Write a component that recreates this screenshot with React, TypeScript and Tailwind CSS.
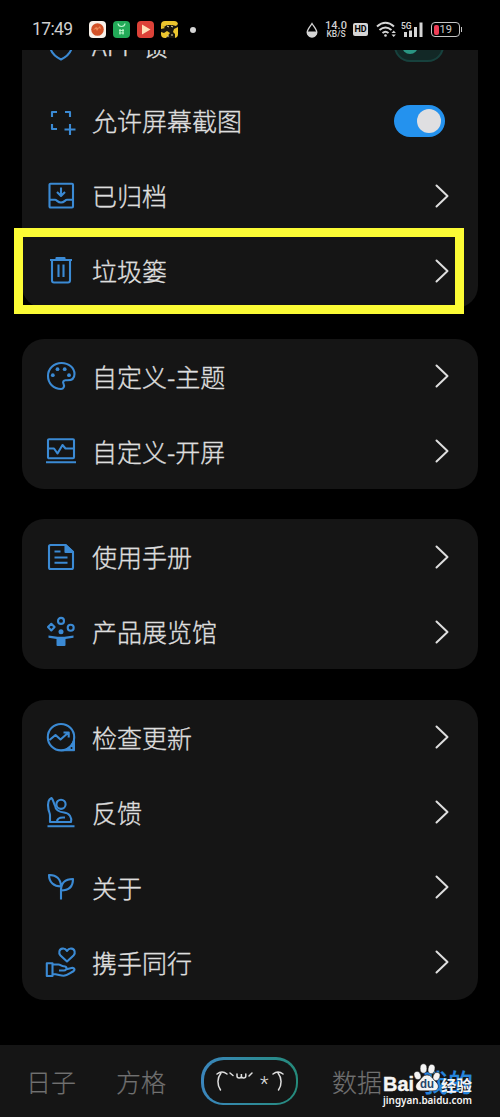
import type { ReactNode } from 'react';

const icons: Record<string, ReactNode> = {
  lock: <path d="M15 1l11 4v9c0 7-4 11-11 14.500C8 25 4 21 4 14V5z" />,
  screenshot: (
    <path d="M6 11V6h5M19 6h5v5M6 18v5h5M24 18v11M18.500 23.500h11" />
  ),
  archive: (
    <>
      <rect x="3.500" y="2.800" width="23.500" height="23.700" rx="1" />
      <path d="M15 6.500v8M11 11l4 4 4-4M3.500 18.800H9c2 0 2.500 2.700 6 2.700s4-2.700 6-2.700h6" />
    </>
  ),
  trash: (
    <>
      <path d="M4 4h22M10.500 3V2h8v1M6 4.500v20c0 1.500.5 2 2 2h14c1.500 0 2-.5 2-2v-20" />
      <path d="M12.500 8.500v12.500M17.500 8.500v12.500" />
    </>
  ),
  theme: (
    <>
      <path d="M15 28C7.500 28 2 22.200 2 15S7.800 2 15.500 2C23 2 28.500 7 28.500 13c0 4.500-3 6.300-7 6.300h-2c-2 0-3 1.700-2 3.500 1.300 2.500 0 5.200-2.500 5.200z" />
      <g fill="currentColor" strokeWidth="0">
        <circle cx="6.800" cy="14.200" r="1.900" />
        <circle cx="11.500" cy="8.200" r="1.900" />
        <circle cx="18.700" cy="8.200" r="1.900" />
        <circle cx="23" cy="14.200" r="1.900" />
      </g>
    </>
  ),
  splash: (
    <>
      <rect x="2" y="3.300" width="26" height="19" rx="1" />
      <path d="M2 12.500h6l3.500 5 5-8.500 3 3.500H28M0 26.300h30" />
    </>
  ),
  manual: (
    <>
      <path d="M19.500 3H4.500Q3 3 3 4.500v21Q3 27 4.500 27h21q1.500 0 1.500-1.500V10z" />
      <path d="M19.500 3v7H27z" fill="currentColor" />
      <path d="M8.500 9.500h6M8.500 15.500h13M8.500 20.800h13" />
    </>
  ),
  gallery: (
    <>
      <circle cx="15" cy="3.900" r="3" />
      <path d="M5.300 6.800l3.300 3.300-3.300 3.300L2 10.100z" />
      <circle cx="24.700" cy="10.800" r="3" />
      <g fill="currentColor" strokeWidth="0">
        <circle cx="15" cy="14.700" r="2.500" />
        <path d="M2.500 18.500l9 1.200h7l9-1.200v2.300l-8 1.200V28q0 1-1 1h-7q-1 0-1-1v-6l-8-1.200z" />
      </g>
    </>
  ),
  update: (
    <>
      <circle cx="15" cy="15.200" r="13.200" />
      <path d="M3.500 18l6-5 5 4.500 8-7M17.500 10.500h5.200v5" />
      <path d="M28.500 15.500V28.700H15.500C21 27.500 27 23 28.500 15.500z" fill="currentColor" strokeWidth="1" />
      <circle cx="25.500" cy="26" r="1" fill="#151515" strokeWidth="0" />
    </>
  ),
  feedback: (
    <>
      <circle cx="15" cy="7.300" r="4.600" />
      <path d="M5.500 1C2 2.500 1.500 7.500 2.500 12.500c.5 2.500 1.500 3.500 1.500 6V25h21c1-4.500-1.500-9-7-9.500-5-.5-8.500-2.500-9-7C7.500 6 7.500 3 5.500 1zM11 25c0-3 2-4.500 6-4.500h2M1.500 29.300h27" />
    </>
  ),
  about: (
    <path d="M15 27.500V16.500M15 14.500C8 14.500 3 10.500 3 3c7-.5 12 4 12 11.500zM15 18.500c0-7 4-11.500 12-11.500 0 7-4 11.500-12 11.500z" />
  ),
  support: (
    <>
      <path d="M21 14.500l-6.500-6c-2.300-2.500-1.300-6.500 2-6.900 2.200-.3 3.600.9 4.500 2.200.9-1.300 2.300-2.500 4.500-2.200 3.300.4 4.300 4.400 2 6.900z" />
      <path d="M.8 16.300h5.700V29H.8zM6.500 17.500h6c2 0 3 1.700 5 1.700 4 0 4 4.300.5 4.300h-5M19.500 22.500l6-1.500c3-.5 4 2 1.500 3.500-3.500 2-6 4.300-9.500 4.300-3.500 0-6-1.800-11-1.800" />
    </>
  ),
};

const groups = [
  [
    { icon: 'lock', label: 'APP 锁', toggle: 'off' },
    { icon: 'screenshot', label: '允许屏幕截图', toggle: 'on' },
    { icon: 'archive', label: '已归档' },
    { icon: 'trash', label: '垃圾篓', highlighted: true },
  ],
  [
    { icon: 'theme', label: '自定义-主题' },
    { icon: 'splash', label: '自定义-开屏' },
  ],
  [
    { icon: 'manual', label: '使用手册' },
    { icon: 'gallery', label: '产品展览馆' },
  ],
  [
    { icon: 'update', label: '检查更新' },
    { icon: 'feedback', label: '反馈' },
    { icon: 'about', label: '关于' },
    { icon: 'support', label: '携手同行' },
  ],
];

type Item = { icon: string; label: string; toggle?: string; highlighted?: boolean };

function Toggle({ on }: { on: boolean }) {
  if (!on) {
    return (
      <div className="mr-[10px] flex h-8 w-[50px] items-center rounded-full border-2 border-[#17413d] bg-[#122826] px-1.5">
        <div className="h-4 w-4 rounded-full bg-[#2a9582]" />
      </div>
    );
  }
  return (
    <div className="mr-[9px] flex h-8 w-[51px] items-center justify-end rounded-full bg-[#2492ee] px-1">
      <div className="h-6 w-6 rounded-full bg-[#dfdfe1]" />
    </div>
  );
}

function Row({ item }: { item: Item }) {
  return (
    <div className="relative flex h-[75px] items-center pr-6 pl-6">
      <svg
        className="h-[30px] w-[30px] shrink-0 text-[#3b8ad4]"
        viewBox="0 0 30 30"
        fill="none"
        stroke="currentColor"
        strokeWidth="2.100"
        strokeLinejoin="round"
        overflow="visible"
      >
        {icons[item.icon]}
      </svg>
      <span className="ml-4 flex-1 text-[25px] leading-none font-light whitespace-nowrap text-[#dedede] [-webkit-text-stroke:0.35px]">
        {item.label}
      </span>
      {item.toggle ? (
        <Toggle on={item.toggle === 'on'} />
      ) : (
        <svg className="mr-[5px] h-6 w-[14px]" viewBox="0 0 14 24" fill="none" stroke="#dedede" strokeWidth="2" strokeLinecap="round" strokeLinejoin="round">
          <path d="M1.500 1.500L12.500 12l-11 10.500" />
        </svg>
      )}
      {item.highlighted && (
        <div className="absolute -top-[5px] -left-2 h-[86px] w-[450px] border-[9px] border-[#fbfb35]" />
      )}
    </div>
  );
}

function StatusBar() {
  return (
    <header className="flex h-[50px] shrink-0 items-center pt-[9px] pr-[38px] pl-8 text-[#cfcfcf]">
      <span className="w-[57px] font-['Roboto'] text-[17.500px] leading-none tracking-[-0.600px] whitespace-nowrap">17:49</span>
      <div className="flex items-center gap-[7px]">
        <svg className="h-[17px] w-[17px]" viewBox="0 0 17 17">
          <rect width="17" height="17" rx="4" fill="#f8f1e9" />
          <circle cx="8.500" cy="8.500" r="6.300" fill="#d35227" />
          <path d="M4 9l3-3 2 1 2-2 1 3-2-1-2 3-1-2z" fill="#f08a58" />
        </svg>
        <svg className="h-[17px] w-[17px]" viewBox="0 0 17 17" fill="none" stroke="#b7f5c9" strokeWidth="1.200">
          <rect width="17" height="17" rx="4" fill="#22aa58" stroke="none" />
          <path d="M5 2.500c.5 4 6.500 4 7 0M6 9.500h5M6 12h5M7 8v5.500M10 8v5.500" />
        </svg>
        <svg className="h-[17px] w-[17px]" viewBox="0 0 17 17">
          <rect width="17" height="17" rx="4" fill="#dc4238" />
          <path d="M5 3.500l8.500 5-8.500 5z" fill="#ffe0b8" />
        </svg>
        <svg className="h-[17px] w-[17px]" viewBox="0 0 17 17">
          <rect width="17" height="17" rx="4" fill="#ecc52e" />
          <path d="M0 4l3 2 3-2h5l4 1 2-2v3l-4 2-1 3 2 2v4H5l4-5-3-2-3 2-3-1V8l4-1z" fill="#17150f" />
          <path d="M6 5l2 1M10 5l2 1M7 14v2M10 14h2" stroke="#eee2b0" />
        </svg>
      </div>
      <div className="ml-3 h-1.5 w-1.5 rounded-full bg-[#d5d5d5]" />
      <div className="ml-auto flex items-center">
        <svg className="h-4 w-3" viewBox="0 0 12 16">
          <path d="M6 1.500C4.500 4 1.200 7.300 1.200 10.300a4.800 4.700 0 009.600 0C10.800 7.300 7.500 4 6 1.500z" fill="none" stroke="#d5d5d5" strokeWidth="1.300" />
          <path d="M1 9.500h10c.5 3-2 5.500-5 5.500S.5 12.500 1 9.500z" fill="#d5d5d5" />
        </svg>
        <div className="ml-[7px] w-[22px] text-center font-['Roboto'] font-medium whitespace-nowrap">
          <div className="text-[11px] leading-[9px]">14.0</div>
          <div className="text-[8.500px] leading-[9px]">KB/S</div>
        </div>
        <div className="ml-1.5 flex h-[13px] w-[15px] items-center justify-center rounded-[2px] bg-[#d5d5d5] font-['Roboto'] text-[9px] leading-none font-bold text-black">
          HD
        </div>
        <svg className="ml-2 h-[17px] w-[21px]" viewBox="0 0 21 17" fill="none" stroke="#d5d5d5" strokeWidth="2">
          <path d="M1 5.500q8.500-7.500 17 0M3.500 9q6-5 12 0M6.500 12q3-2.500 6 0" />
          <circle cx="9.500" cy="14.500" r="1.300" fill="#d5d5d5" stroke="none" />
          <path d="M15.500 12l2.200-2.500 2.200 2.500zM15.500 13.500l2.200 2.500 2.200-2.500z" fill="#d5d5d5" stroke="none" />
        </svg>
        <svg className="ml-1 h-[17px] w-[23px]" viewBox="0 0 23 17" fill="#d5d5d5">
          <text x="0" y="7.500" fontFamily="Roboto" fontSize="8.500" fontWeight="600">5G</text>
          <path d="M3 11h3v5H3zM8 9.500h3V16H8zM13 6h3v10h-3zM18.500 1.500h3V16h-3z" />
        </svg>
        <div className="ml-[7px] flex h-[15px] w-[29px] items-center gap-[1px] rounded-[4px] border border-[#c5c5c5] p-[1.500px]">
          <div className="h-full w-[5px] rounded-[2px] bg-[#ee3d55]" />
          <span className="font-['Roboto'] text-[11px] leading-none">19</span>
        </div>
        <div className="ml-[1px] h-[5px] w-[1px] bg-[#c5c5c5]" />
      </div>
    </header>
  );
}

function Watermark() {
  return (
    <svg
      className="absolute top-[17px] left-[382px] h-[46px] w-[94px]"
      viewBox="0 0 94 46"
      fill="#f4f4f4"
      fontFamily="'Liberation Sans', 'Noto Sans CJK SC', sans-serif"
      fontWeight="700"
    >
      <text x="1" y="29" fontSize="21" textLength="31" lengthAdjust="spacingAndGlyphs" stroke="#f4f4f4" strokeWidth="0.400">Bai</text>
      <g stroke="#151515" strokeWidth="0.500">
        <ellipse cx="35.500" cy="13.500" rx="3.300" ry="4.300" transform="rotate(-20 35.500 13.500)" />
        <ellipse cx="41.500" cy="6.500" rx="3.400" ry="4.700" />
        <ellipse cx="49.500" cy="7" rx="3.400" ry="4.700" transform="rotate(12 49.500 7)" />
        <ellipse cx="54.500" cy="14.500" rx="3.300" ry="4.300" transform="rotate(20 54.500 14.500)" />
        <path d="M45 13c-4 0-5 3-7.500 5.500-3 2.500-4.500 5-3.500 7.500 1.300 3.500 5 2.800 11 2.800s9.700.7 11-2.800c1-2.500-.5-5-3.500-7.500C50 16 49 13 45 13z" />
      </g>
      <text x="38" y="26" fontSize="12" fill="#26466a" textLength="14" lengthAdjust="spacingAndGlyphs">du</text>
      <text x="59" y="28.500" fontSize="15" textLength="31" lengthAdjust="spacingAndGlyphs">经验</text>
      <text x="1" y="42" fontSize="10.500" fontFamily="'Noto Sans', sans-serif" fontWeight="600" textLength="89" lengthAdjust="spacingAndGlyphs">
        jingyan.baidu.com
      </text>
    </svg>
  );
}

function BottomNav() {
  return (
    <nav className="relative flex h-[72px] shrink-0 items-center bg-[#151515] pl-[26px] text-[25px] leading-none font-light text-[#707070] [-webkit-text-stroke:0.2px]">
      <span className="w-[90px]">日子</span>
      <span className="w-[85px]">方格</span>
      <div className="h-12 w-[97px] rounded-[22px] bg-linear-to-r from-[#3b86bd] to-[#258b7b] p-[2.500px]">
        <div className="flex h-full items-center justify-center rounded-[20px] bg-[#151515]">
          <svg className="h-7 w-[70px]" viewBox="0 0 70 28" fill="none" stroke="#dedede" strokeWidth="1.500" strokeLinecap="round">
            <path d="M6 6c-4 5-4 12-.500 17M2 7c3-2.500 7-2.500 10 0M15 6l3 2.500M22 7v2q0 2 2.200 2t2.200-2V7v2q0 2 2.200 2t2.200-2V7M37 6l-3 3" />
            <path d="M63 6c4 5 4 12 .5 17M58 7c3-2.500 7-2.500 10 0" />
            <text x="45" y="24" fill="#dedede" stroke="none" fontFamily="Roboto" fontSize="20">*</text>
          </svg>
        </div>
      </div>
      <span className="ml-[34px] w-[91px]">数据</span>
      <span className="font-medium text-[#2684dc]">我的</span>
      <Watermark />
    </nav>
  );
}

export default function App() {
  return (
    <div className="flex h-[1117px] w-[500px] flex-col overflow-hidden bg-black font-['Noto_Sans_CJK_SC',sans-serif]">
      <StatusBar />
      <main className="flex-1 overflow-hidden px-[22px]">
        {/* list is scrolled, so the first row is partly under the status bar */}
        <div className="-mt-[42px] flex flex-col gap-[30.500px]">
          {groups.map((group, i) => (
            <section key={i} className="rounded-[22px] bg-[#151515]">
              {group.map((item) => (
                <Row key={item.icon} item={item} />
              ))}
            </section>
          ))}
        </div>
      </main>
      <BottomNav />
    </div>
  );
}
